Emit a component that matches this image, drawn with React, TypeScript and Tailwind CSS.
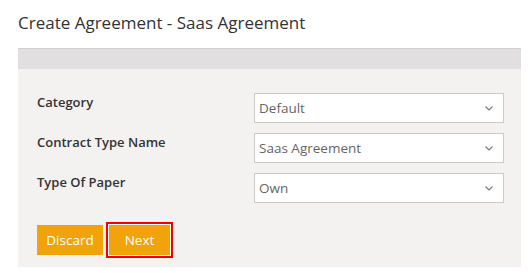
import React from "react";

const fields = [
  { label: "Category", value: "Default" },
  { label: "Contract Type Name", value: "Saas Agreement" },
  { label: "Type Of Paper", value: "Own" },
];

function Chevron() {
  return (
    <svg width="8" height="5" viewBox="0 0 8 5" className="shrink-0">
      <polyline points="0.5,0.5 4,4 7.5,0.5" fill="none" stroke="#777" strokeWidth="1.1" />
    </svg>
  );
}

export default function App() {
  return (
    <div className="w-[531px] h-[273px] bg-white overflow-hidden font-['Open_Sans','Liberation_Sans',sans-serif]">
      <h1 className="pl-[18px] pt-[11px] text-[17px] leading-[24px] text-[#333] mb-[13px]">
        Create Agreement - Saas Agreement
      </h1>

      <div className="ml-[18px] w-[503px]">
        <div className="h-[21px] bg-[#e1dfdf] border-t border-[#cfcfcf]" />

        <div className="bg-[#f3f2f1] pl-[19px] pr-[17px] pt-[24px] pb-[12px]">
          <div className="flex flex-col gap-[10px]">
            {fields.map((f) => (
              <div key={f.label} className="flex items-start">
                <label className="w-[217px] text-[13px] leading-[18px] font-semibold text-[#333]">
                  {f.label}
                </label>
                <div className="flex-1 h-[30px] bg-white border border-[#cacaca] flex items-center justify-between pl-[4px] pr-[10px]">
                  <span className="text-[13.5px] text-[#666]">{f.value}</span>
                  <Chevron />
                </div>
              </div>
            ))}
          </div>

          <div className="flex items-center mt-[22px]">
            <button className="w-[66px] h-[30px] bg-[#f0a30a] text-white text-[13.5px]">Discard</button>
            <button className="ml-[6px] w-[61px] h-[30px] bg-[#f0a30a] text-white text-[13.5px] shadow-[0_0_0_1px_#ffffff,0_0_0_3px_#f20000]">
              Next
            </button>
          </div>
        </div>
      </div>
    </div>
  );
}
